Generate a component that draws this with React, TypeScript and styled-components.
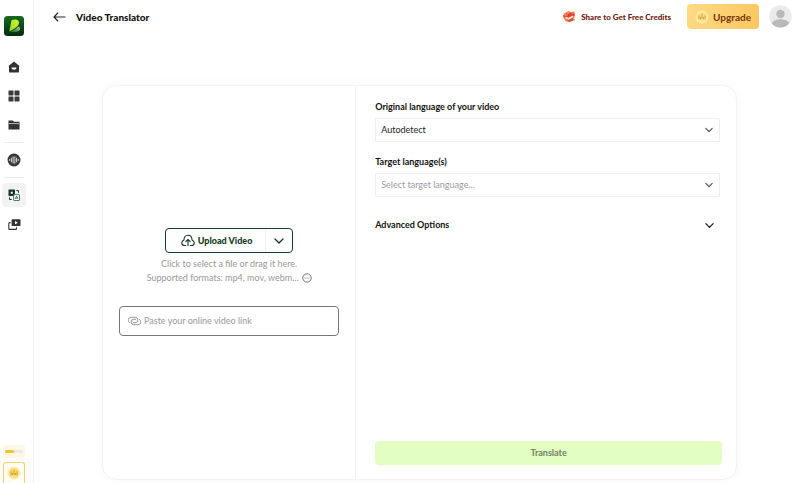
import React from "react";
import styled, { createGlobalStyle } from "styled-components";

const GlobalStyle = createGlobalStyle`
  *, *::before, *::after { box-sizing: border-box; }
  body {
    margin: 0;
    background: #fff;
    color: #111;
    font-family: Lato, "Liberation Sans", sans-serif;
    font-size: 9px;
    line-height: 14px;
  }
  button, input, select { font: inherit; color: inherit; margin: 0; }
  button { cursor: pointer; }
`;

const Page = styled.div`
  display: flex;
  height: 100vh;
  overflow: hidden;
`;

const Sidebar = styled.nav`
  flex: none;
  width: 34px;
  padding: 16px 5px 0 0;
  border-right: 1px solid #f0f0f0;
  display: flex;
  flex-direction: column;
  align-items: center;
`;

const Logo = styled.a`
  display: block;
  height: 20px;
  margin-bottom: 19px;
`;

const NavButton = styled.button<{ $active?: boolean }>`
  flex: none;
  width: 24px;
  height: 24px;
  margin-bottom: 5px;
  padding: 0;
  border: 0;
  border-radius: 4px;
  background: ${(p) => (p.$active ? "#f2f2f2" : "transparent")};
  display: grid;
  place-items: center;
`;

const NavRule = styled.hr`
  flex: none;
  width: 20px;
  margin: 0 0 5px;
  border: 0;
  border-top: 1px solid #ebebeb;
`;

const SidebarFoot = styled.div`
  width: 22px;
  margin-top: auto;
  display: grid;
  gap: 4px;
`;

const Meter = styled.div`
  height: 13px;
  padding: 5px 2px;
  border-radius: 3px;
  background: #fdf7e3;
`;

const MeterTrack = styled.div`
  height: 3px;
  border-radius: 2px;
  background: #e8e8ee;
`;

const MeterFill = styled.div`
  width: 50%;
  height: 3px;
  border-radius: 2px;
  background: #f5c435;
`;

const CoinButton = styled.button`
  height: 21px;
  padding: 0;
  border: 1px solid #f3cf6d;
  border-bottom: 0;
  border-radius: 3px 3px 0 0;
  background: #fffdf6;
  display: grid;
  place-items: center;
`;

const Content = styled.div`
  flex: 1;
  min-width: 0;
  display: flex;
  flex-direction: column;
`;

const Header = styled.header`
  height: 33px;
  padding: 0 8px 0 19px;
  display: flex;
  align-items: center;
`;

const BackButton = styled.button`
  width: 13px;
  height: 20px;
  padding: 0;
  border: 0;
  background: none;
  display: grid;
  place-items: center;
`;

const Title = styled.h1`
  margin: 0 auto 0 10px;
  font-size: 10px;
  font-weight: 900;
`;

const ShareButton = styled.button`
  padding: 0;
  border: 0;
  background: none;
  display: flex;
  align-items: center;
  gap: 5px;
  color: #6b2110;
  font-size: 8px;
  font-weight: 900;
`;

const UpgradeButton = styled.button`
  height: 25px;
  margin: 0 10px 0 16px;
  padding: 0 8px;
  border: 0;
  border-radius: 4px;
  background: linear-gradient(100deg, #fdda85, #fbc75f);
  display: flex;
  align-items: center;
  gap: 4px;
  color: #75360c;
  font-size: 10px;
  font-weight: 700;
`;

const Avatar = styled.button`
  height: 23px;
  padding: 0;
  border: 0;
  border-radius: 50%;
  background: none;
`;

const Card = styled.main`
  flex: 1;
  min-height: 0;
  margin: 52px 63px 3px 68px;
  border: 1px solid #f2f2f2;
  border-radius: 14px;
  box-shadow: 0 0 12px rgba(0, 0, 0, 0.03);
  display: grid;
  grid-template-columns: 2fr 3fr;
`;

const SourcePane = styled.section`
  padding: 0 16px;
  border-right: 1px solid #f2f2f2;
  display: flex;
  flex-direction: column;
  align-items: center;
  justify-content: center;
`;

const SplitButton = styled.div`
  width: 128px;
  height: 25px;
  margin-bottom: 4px;
  border: 1px solid #173c27;
  border-radius: 4px;
  display: flex;
  color: #123822;
`;

const UploadButton = styled.button`
  flex: 1;
  padding: 0 0 0 2px;
  border: 0;
  border-right: 1px solid #f0f0f0;
  background: none;
  display: flex;
  align-items: center;
  justify-content: center;
  gap: 3px;
  font-weight: 900;
`;

const UploadMenuButton = styled.button`
  width: 26px;
  padding: 0;
  border: 0;
  background: none;
  display: grid;
  place-items: center;
`;

const Hint = styled.p`
  margin: 0;
  display: flex;
  align-items: center;
  gap: 3px;
  color: #999;
`;

const HintButton = styled.button`
  height: 10px;
  padding: 0;
  border: 0;
  background: none;
  color: #555;
  display: grid;
  place-items: center;
`;

const LinkField = styled.label`
  width: 100%;
  height: 30px;
  margin: 21px 0 1px;
  padding: 0 8px;
  border: 1px solid #777;
  border-radius: 4px;
  display: flex;
  align-items: center;
  gap: 3px;
  color: #999;
`;

const LinkInput = styled.input`
  flex: 1;
  min-width: 0;
  padding: 0;
  border: 0;
  outline: 0;
  background: none;
  color: #222;
  &::placeholder { color: #999; opacity: 1; }
`;

const OptionsPane = styled.section`
  padding: 14px 14px 14px 19px;
  display: flex;
  flex-direction: column;
`;

const Label = styled.label`
  margin-bottom: 4px;
  font-weight: 700;
`;

const SelectBox = styled.div`
  display: grid;
  align-items: center;
  margin: 0 2px 13px 0;
  height: 24px;
`;

const SelectChevron = styled.span`
  grid-area: 1 / 1;
  justify-self: end;
  margin-right: 7px;
  height: 8px;
  line-height: 0;
  color: #444;
  pointer-events: none;
`;

const Select = styled.select<{ $empty?: boolean }>`
  grid-area: 1 / 1;
  appearance: none;
  width: 100%;
  height: 24px;
  padding: 0 20px 0 5px;
  border: 1px solid #eee;
  border-radius: 1px;
  background: #fff;
  color: ${(p) => (p.$empty ? "#9c9ca2" : "#222")};
`;

const AdvancedButton = styled.button`
  margin: 8px 8px 0 0;
  padding: 0;
  border: 0;
  background: none;
  display: flex;
  align-items: center;
  justify-content: space-between;
  font-weight: 700;
`;

const TranslateButton = styled.button`
  height: 24px;
  margin-top: auto;
  border: 0;
  border-radius: 4px;
  background: #e3fec3;
  color: #6f8160;
  font-weight: 700;
`;

const Chevron = ({ size = 8 }: { size?: number }) => (
  <svg width={size} height={size} viewBox="0 0 10 10" fill="none" stroke="currentColor" strokeWidth="1.3" strokeLinecap="round" strokeLinejoin="round" aria-hidden="true">
    <path d="M1 3l4 4 4-4" />
  </svg>
);

const Coin = ({ pale = false }: { pale?: boolean }) => (
  <svg width="14" height="14" viewBox="0 0 14 14" aria-hidden="true">
    <circle cx="7" cy="7" r="6.5" fill={pale ? "#fdeaa4" : "#fbe9a6"} />
    <circle cx="7" cy="7" r="5" fill={pale ? "#f9dc7c" : "#f7d868"} stroke="#fff3b8" strokeWidth=".5" />
    <path d="M4 5.8v3.4M5.5 7.4v1.8M7 4.2v5M8.500 7.400v1.800M10 5.800v3.400" stroke="#c9982a" strokeWidth=".8" strokeLinecap="round" />
    <path d="M4.200 9.800h5.600" stroke="#fff4b4" strokeWidth=".7" />
  </svg>
);

const LogoMark = () => (
  <svg width="20" height="20" viewBox="0 0 20 20" aria-hidden="true">
    <defs>
      <linearGradient id="tile" x1="0" y1="0" x2="0" y2="1">
        <stop offset="0" stopColor="#176a22" />
        <stop offset="1" stopColor="#032c10" />
      </linearGradient>
      <linearGradient id="leaf" x1="1" y1="0" x2="0" y2="1">
        <stop offset="0" stopColor="#d5f52f" />
        <stop offset="1" stopColor="#8fdc22" />
      </linearGradient>
      <linearGradient id="fold" x1="1" y1="0" x2="0" y2="1">
        <stop offset="0" stopColor="#b0d795" />
        <stop offset="1" stopColor="#1c5c26" />
      </linearGradient>
    </defs>
    <rect width="20" height="20" rx="3.500" fill="url(#tile)" />
    <path d="M5.600 15.800c4.200-1.200 7-2.900 8.500-5.300 2 .6 2.600 2.100 1.500 3.600-1.400 1.900-4.600 2.300-10 1.700z" fill="url(#fold)" />
    <path d="M7.500 4.300c2.400-1 5.300-1.100 6.700.2 1.400 1.500.9 4.100-1 6.100-1.700 1.800-4.400 3.300-7.900 4.700z" fill="url(#leaf)" />
  </svg>
);

const HomeIcon = () => (
  <svg width="12" height="12" viewBox="0 0 12 12" aria-hidden="true">
    <path d="M6 .4l5.500 4.500-.4.800H11v5.100a.7.7 0 0 1-.7.700H1.700a.7.7 0 0 1-.7-.7V5.700H.9l-.4-.8z" fill="#333" />
    <path d="M3.500 6.600h5C8.200 8.200 7.300 8.800 6 8.800s-2.200-.6-2.500-2.200z" fill="#fff" />
  </svg>
);

const GridIcon = () => (
  <svg width="12" height="12" viewBox="0 0 12 12" fill="#3b3b3b" aria-hidden="true">
    <rect x=".5" y=".5" width="5" height="5" rx=".4" />
    <rect x="6.500" y=".5" width="5" height="5" rx=".4" />
    <rect x=".5" y="6.500" width="5" height="5" rx=".4" />
    <rect x="6.500" y="6.500" width="5" height="5" rx=".4" />
  </svg>
);

const FolderIcon = () => (
  <svg width="12" height="12" viewBox="0 0 12 12" aria-hidden="true">
    <path d="M.5 1.500h4.200L6 2.800h5.500v7.700H.5z" fill="#333" />
    <path d="M1 4.600h10" stroke="#ccc" strokeWidth=".9" />
  </svg>
);

const VoiceIcon = () => (
  <svg width="14" height="14" viewBox="0 0 13 13" aria-hidden="true">
    <circle cx="6.500" cy="6.500" r="6" fill="#383838" />
    <path d="M2.500 5.900v1.200M4.100 4.700v3.600M5.700 3.500v6M7.300 3.500v6M8.900 4.700v3.600M10.500 5.900v1.200" stroke="#ddd" strokeWidth=".9" strokeLinecap="round" />
  </svg>
);

const TranslateIcon = () => (
  <svg width="12" height="12" viewBox="0 0 12 12" fill="none" aria-hidden="true">
    <rect x=".5" y=".5" width="6.500" height="6.500" rx=".5" fill="#173326" />
    <path d="M2.800 2.700h2v2h-2z" fill="#fff" />
    <path d="M8.300 1.600h2.200v2.200M1.500 8.300v2.200h2.200" stroke="#173326" />
    <rect x="5.600" y="5.600" width="5.900" height="5.900" rx=".5" fill="#f5f5f5" stroke="#285b46" strokeWidth=".8" />
    <path d="M7.200 10l1.400-3 1.400 3M7.700 9.100h1.800" stroke="#285b46" strokeWidth=".7" />
  </svg>
);

const VideosIcon = () => (
  <svg width="13" height="13" viewBox="0 0 13 13" fill="none" aria-hidden="true">
    <path d="M2.700 4.600H1.500a.7.7 0 0 0-.7.7v5.400c0 .4.3.7.7.7h6.300c.4 0 .7-.3.7-.7V9.300" stroke="#333" strokeWidth="1.100" />
    <rect x="3.600" y="1.300" width="8.900" height="6.800" rx=".9" fill="#333" />
    <path d="M7 3.100l2.900 1.600L7 6.300z" fill="#fff" />
  </svg>
);

const BackIcon = () => (
  <svg width="13" height="10" viewBox="0 0 13 10" fill="none" stroke="#222" strokeWidth="1.100" strokeLinecap="round" strokeLinejoin="round" aria-hidden="true">
    <path d="M12 5H1M4.800 1L1 5l3.800 4" />
  </svg>
);

const GiftIcon = () => (
  <svg width="14" height="13" viewBox="0 0 14 13" aria-hidden="true">
    <path d="M3.500 2.500L6.500 1l2 1 3.800-.6.500 3.800-1 5.200-4 1.900-3.900-.9L1.500 8 .9 5.500z" fill="#f58a55" />
    <path d="M1 5.200l4.500.8 6.800-3.200.3 3-5.900 2.800L2 7.500z" fill="#e5402f" />
    <path d="M3.500 2.500L6 4.800l2.200-2.600 1.500 1.300-3.400 3.100z" fill="#d93150" />
    <path d="M3.600 6.400l3 1.300 4.100-2.300.5 1.500-4.500 2.600-3.200-1.300z" fill="#fff0e0" />
    <path d="M3.400 9l3.400 1.200 4.400-2.400-.5 2.700-3.300 1.200z" fill="#dd4a3c" />
    <path d="M1.600 3.300l1 .7M12 9.600l1 .4" stroke="#b765c4" strokeWidth="1" />
  </svg>
);

const AvatarIcon = () => (
  <svg width="23" height="23" viewBox="0 0 23 23" aria-hidden="true">
    <defs>
      <clipPath id="face"><circle cx="11.500" cy="11.500" r="11" /></clipPath>
    </defs>
    <circle cx="11.500" cy="11.500" r="11.300" fill="#ebebeb" />
    <g fill="#b9b9b9" clipPath="url(#face)">
      <circle cx="11.500" cy="9" r="4.200" />
      <path d="M2.500 18.500c1.900-3 4.900-4.200 9-4.200s7.100 1.200 9 4.200L17 24H6z" />
    </g>
  </svg>
);

const UploadIcon = () => (
  <svg width="14" height="13" viewBox="0 0 14 13" fill="none" stroke="currentColor" strokeWidth="1.100" strokeLinecap="round" strokeLinejoin="round" aria-hidden="true">
    <path d="M4.600 11.500H3.500C1.900 11.500.8 10.300.8 8.900c0-1.300.9-2.300 2.100-2.600C2.900 3.200 4.500 1.200 7 1.200s4.100 2 4.100 5.100c1.200.3 2.100 1.300 2.100 2.600 0 1.400-1.100 2.600-2.700 2.600H9.400" />
    <path d="M7 11.700V5.700M4.800 7.700L7 5.500l2.200 2.200" />
  </svg>
);

const LinkIcon = () => (
  <svg width="13" height="10" viewBox="0 0 13 10" fill="none" stroke="#888" strokeWidth=".9" strokeLinecap="round" aria-hidden="true">
    <path d="M1.600 6.700A2.900 2.900 0 0 1 3.500 1.300h3.700a2.700 2.700 0 0 1 0 5.400H5.400" />
    <path d="M11.400 3.300a2.900 2.900 0 0 1-1.900 5.400H5.800a2.700 2.700 0 0 1 0-5.400h1.800" />
  </svg>
);

const MoreIcon = () => (
  <svg width="10" height="10" viewBox="0 0 10 10" aria-hidden="true">
    <circle cx="5" cy="5" r="4.200" fill="none" stroke="currentColor" strokeWidth=".8" />
    <g fill="currentColor">
      <circle cx="3" cy="5" r=".5" />
      <circle cx="5" cy="5" r=".5" />
      <circle cx="7" cy="5" r=".5" />
    </g>
  </svg>
);

export default function App() {
  return (
    <>
      <GlobalStyle />
      <Page>
        <Sidebar aria-label="Main">
          <Logo href="#" aria-label="Start page"><LogoMark /></Logo>
          <NavButton aria-label="Home"><HomeIcon /></NavButton>
          <NavButton aria-label="Tools"><GridIcon /></NavButton>
          <NavButton aria-label="Projects"><FolderIcon /></NavButton>
          <NavRule />
          <NavButton aria-label="Voice"><VoiceIcon /></NavButton>
          <NavRule />
          <NavButton $active aria-current="page" aria-label="Video translator"><TranslateIcon /></NavButton>
          <NavButton aria-label="Videos"><VideosIcon /></NavButton>
          <SidebarFoot>
            <Meter><MeterTrack><MeterFill /></MeterTrack></Meter>
            <CoinButton aria-label="Credits"><Coin /></CoinButton>
          </SidebarFoot>
        </Sidebar>

        <Content>
          <Header>
            <BackButton aria-label="Back"><BackIcon /></BackButton>
            <Title>Video Translator</Title>
            <ShareButton><GiftIcon />Share to Get Free Credits</ShareButton>
            <UpgradeButton><Coin pale />Upgrade</UpgradeButton>
            <Avatar aria-label="Account"><AvatarIcon /></Avatar>
          </Header>

          <Card>
            <SourcePane>
              <SplitButton>
                <UploadButton><UploadIcon />Upload Video</UploadButton>
                <UploadMenuButton aria-label="More upload sources"><Chevron size={10} /></UploadMenuButton>
              </SplitButton>
              <Hint>Click to select a file or drag it here.</Hint>
              <Hint>
                Supported formats: mp4, mov, webm...
                <HintButton aria-label="All formats"><MoreIcon /></HintButton>
              </Hint>
              <LinkField>
                <LinkIcon />
                <LinkInput type="url" aria-label="Video link" placeholder="Paste your online video link" />
              </LinkField>
            </SourcePane>

            <OptionsPane>
              <Label htmlFor="original">Original language of your video</Label>
              <SelectBox>
                <Select id="original" defaultValue="auto">
                  <option value="auto">Autodetect</option>
                </Select>
                <SelectChevron><Chevron /></SelectChevron>
              </SelectBox>
              <Label htmlFor="target">Target language(s)</Label>
              <SelectBox>
                <Select id="target" defaultValue="" $empty>
                  <option value="">Select target language...</option>
                </Select>
                <SelectChevron><Chevron /></SelectChevron>
              </SelectBox>
              <AdvancedButton aria-expanded="false">Advanced Options<Chevron size={9} /></AdvancedButton>
              <TranslateButton>Translate</TranslateButton>
            </OptionsPane>
          </Card>
        </Content>
      </Page>
    </>
  );
}
